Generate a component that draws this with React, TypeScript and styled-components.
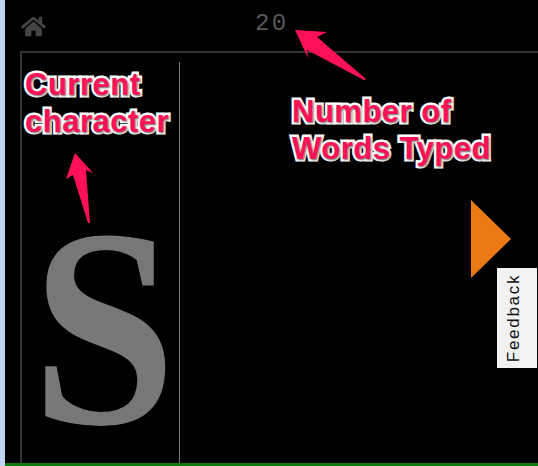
import React from 'react'
import styled, { createGlobalStyle } from 'styled-components'
import { FaHome } from 'react-icons/fa'

const GlobalStyle = createGlobalStyle`
  html, body {
    margin: 0;
    padding: 0;
    background: #000;
  }
`

export default function App() {
  return (
    <Page>
      <GlobalStyle />
      <SideStrip />
      <Main>
        <TopBar>
          <HomeLink>
            <FaHome size={25} />
          </HomeLink>
          <WordCount>20</WordCount>
        </TopBar>
        <Frame>
          <CharPanel>
            <CurrentChar>S</CurrentChar>
          </CharPanel>
          <TextPanel>
            <NextButton />
          </TextPanel>
        </Frame>
        <BottomBar />
      </Main>

      <Note $left={25} $top={66}>
        Current
        <br />
        character
      </Note>
      <Note $left={292} $top={93}>
        Number of
        <br />
        Words Typed
      </Note>

      <Arrows viewBox="0 0 538 466">
        <polygon points="295,30 327,32 317,37 366,79 364,80 307,50 308,58" fill="#ff1158" />
        <polygon points="75,153 93,173 86,170 90,223 88,223 73,175 66,179" fill="#ff1158" />
      </Arrows>

      <FeedbackTab>
        <FeedbackLabel>Feedback</FeedbackLabel>
      </FeedbackTab>
    </Page>
  )
}

const Page = styled.div`
  display: flex;
  position: relative;
  width: 538px;
  height: 466px;
  overflow: hidden;
  background: #000;
`

const SideStrip = styled.div`
  flex: 0 0 5px;
  background: #bdd5ee;
`

const Main = styled.div`
  display: flex;
  flex: 1;
  flex-direction: column;
  min-width: 0;
`

const TopBar = styled.header`
  display: flex;
  flex: 0 0 51px;
  align-items: center;
  padding-left: 16px;
  box-sizing: border-box;
`

const HomeLink = styled.a`
  display: flex;
  color: #444;
  margin-top: 2px;
`

const WordCount = styled.div`
  margin-left: 209px;
  margin-top: -5px;
  font-family: 'Liberation Mono', monospace;
  font-size: 24px;
  letter-spacing: 2.3px;
  color: #585858;
`

const Frame = styled.main`
  display: flex;
  flex: 1;
  margin-left: 15px;
  border-top: 2px solid #333;
  border-left: 2px solid #333;
  min-height: 0;
`

const CharPanel = styled.section`
  display: flex;
  flex: 0 0 158px;
  min-width: 0;
  height: calc(100% - 9px);
  box-sizing: border-box;
  margin-top: 9px;
  border-right: 1px solid #777;
  align-items: flex-end;
  justify-content: center;
`

const CurrentChar = styled.div`
  font-family: 'Liberation Serif', serif;
  font-size: 280px;
  font-weight: 700;
  line-height: 271px;
  height: 271px;
  color: #777;
  transform: translateX(3px) scale(0.93, 1.012);
`

const TextPanel = styled.section`
  display: flex;
  flex: 1;
  justify-content: flex-end;
  padding: 147px 27px 0 0;
`

const NextButton = styled.div`
  width: 0;
  height: 0;
  border-top: 39px solid transparent;
  border-bottom: 39px solid transparent;
  border-left: 40px solid #ea7916;
`

const BottomBar = styled.div`
  flex: 0 0 3px;
  background: #0a7a0a;
`

const Note = styled.div<{ $left: number; $top: number }>`
  position: absolute;
  left: ${p => p.$left}px;
  top: ${p => p.$top}px;
  font-family: 'Liberation Sans', Arial, sans-serif;
  font-size: 31px;
  font-weight: 700;
  line-height: 37px;
  letter-spacing: 0.5px;
  white-space: nowrap;
  color: #ff1158;
  -webkit-text-stroke: 5px #fff;
  paint-order: stroke fill;
  text-shadow: 1px 1px 2px #666;
`

const Arrows = styled.svg`
  position: absolute;
  inset: 0;
  width: 538px;
  height: 466px;
  pointer-events: none;
`

const FeedbackTab = styled.div`
  position: absolute;
  right: 1px;
  top: 268px;
  display: flex;
  align-items: center;
  justify-content: center;
  box-sizing: border-box;
  width: 40px;
  height: 100px;
  padding-right: 6px;
  background: #f2f2f2;
`

const FeedbackLabel = styled.span`
  transform: rotate(-90deg);
  font-family: 'Liberation Sans', Arial, sans-serif;
  font-size: 17px;
  letter-spacing: 1.7px;
  color: #111;
`
